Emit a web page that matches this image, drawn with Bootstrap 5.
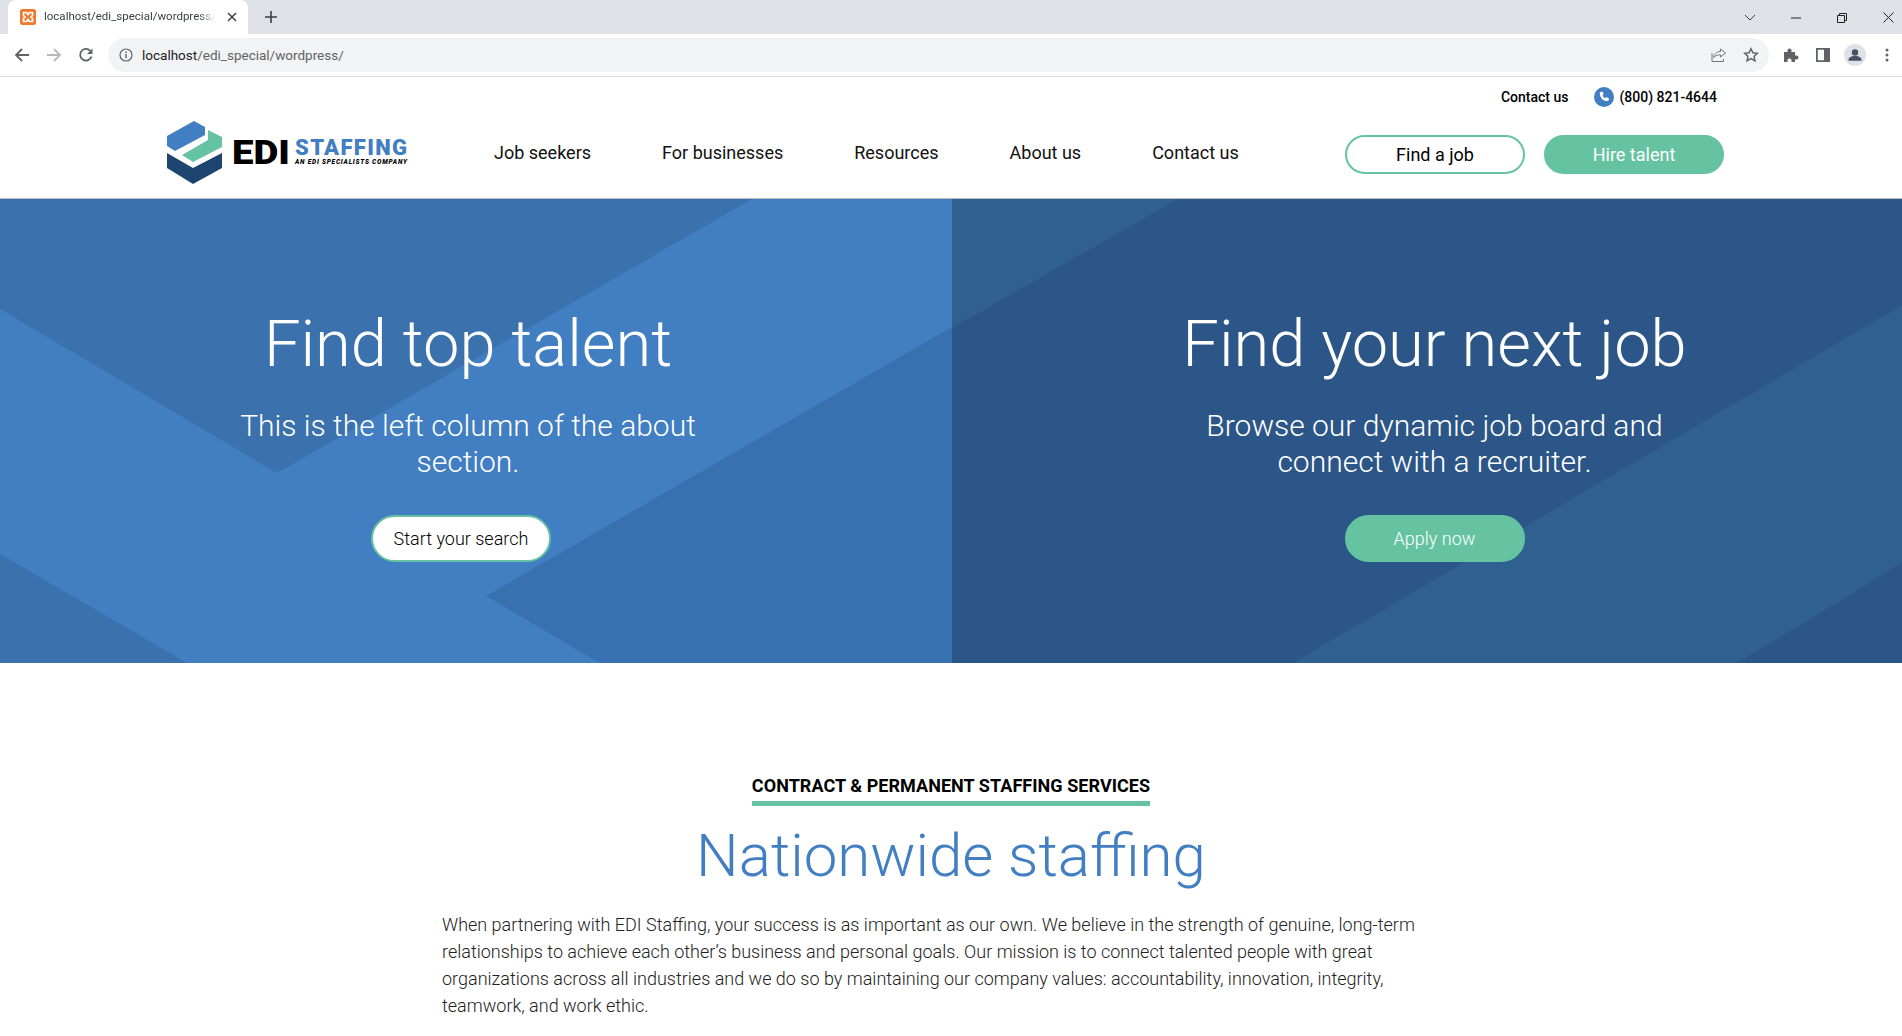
<!DOCTYPE html>
<html lang="en">
<head>
    <meta charset="UTF-8">
    <meta name="viewport" content="width=device-width, initial-scale=1.0">
    <title>EDI Staffing</title>
    <link href="https://cdn.jsdelivr.net/npm/bootstrap@5.3.0/dist/css/bootstrap.min.css" rel="stylesheet">
    <style>
        html, body { overflow: hidden; }
        body { font-family: Roboto, "Liberation Sans", sans-serif; color: #000; height: 1036px; }

        /* browser frame */
        .tab-strip { height: 34px; background: #dee1e6; padding-left: 8px; }
        .browser-tab { width: 240px; height: 34px; background: #fff; border-radius: 8px 8px 0 0; padding: 0 7px 0 12px; font-size: 11.5px; color: #3c4043; }
        .tab-title { width: 172px; white-space: nowrap; overflow: hidden; -webkit-mask-image: linear-gradient(90deg, #000 90%, transparent); mask-image: linear-gradient(90deg, #000 90%, transparent); }
        .win-btns { margin-right: -9px; }
        .win-btn { width: 46px; }
        .tool-bar { height: 43px; background: #fff; border-bottom: 1px solid #dadce0; padding: 0 0 0 6px; }
        .tool-btn { width: 32px; height: 32px; flex: none; }
        .omni-box { height: 34px; width: 1661px; flex: none; margin: 0 6px; background: #f1f3f4; border-radius: 17px; padding: 0 10px 0 11px; font-size: 13.5px; color: #5f6368; }
        .omni-box b { font-weight: 400; color: #202124; }
        .omni-url { margin-left: 9px; }

        /* site header */
        .site-head { height: 122px; padding: 10px 178px 0 166px; border-bottom: 1px solid #bbb; }
        .top-links { font-size: 14px; font-weight: 500; height: 20px; padding-right: 7px; }
        .phone-icon { margin: 0 5px 0 26px; }
        .main-row { margin-top: 14px; }
        .main-links { font-size: 18px; gap: 71px; margin: 0 0 2px 84px; }
        .main-links a { color: #111; text-decoration: none; }
        .main-btns { gap: 19px; margin-top: 3px; }
        .pill-btn { width: 180px; height: 39px; border-radius: 20px; border: 2px solid #66c3a1; font-size: 18px; padding: 0; line-height: 35px; }
        .pill-white { background: #fff; color: #000; }
        .pill-green { background: #66c3a1; color: #fff; }

        /* hero */
        .hero-panel { height: 464px; color: #fff; }
        .hero-left { flex: 0 0 952px; background: #417ec2; padding-right: 16px; }
        .hero-right { flex: 0 0 950px; background: #2c5687; padding-left: 15px; }
        .hero-body { z-index: 1; padding-top: 107px; }
        .hero-title { font-size: 65px; font-weight: 300; line-height: 77px; margin-bottom: 25px; }
        .hero-text { font-size: 30px; font-weight: 300; line-height: 36px; width: 490px; margin: 0 auto 35px; }
        .hero-btn { height: 47px; border-radius: 24px; border: 2px solid #66c3a1; font-size: 18px; font-weight: 300; line-height: 43px; padding: 0; }
        .btn-search { width: 180px; background: #fff; color: #000; margin-right: 14px; }
        .btn-apply { width: 180px; background: #66c3a1; color: #fff; }

        /* intro */
        .intro-wrap { padding-top: 109px; }
        .intro-label { font-size: 18px; font-weight: 700; line-height: 27px; letter-spacing: .05px; border-bottom: 5px solid #66c3a1; padding-bottom: 2px; color: #000; }
        .intro-title { font-size: 60px; font-weight: 300; line-height: 72px; color: #417ec2; margin: 14px 0 19px; }
        .intro-text { width: 980px; margin-left: 442px; font-size: 18px; font-weight: 300; line-height: 27px; color: #222; margin-bottom: 0; }
    </style>
</head>
<body>
    <div class="tab-strip d-flex align-items-center">
        <div class="browser-tab d-flex align-items-center">
            <svg width="16" height="16" viewBox="0 0 16 16" class="flex-shrink-0 me-2">
                <rect width="16" height="16" rx="2.5" fill="#f0782a"/>
                <path d="M3.5 3.5h3L8 5.5l1.5-2h3v3L11 8l1.5 1.5v3h-3L8 10.5l-1.5 2h-3v-3L5 8 3.5 6.500z" fill="none" stroke="#fff" stroke-width="1.7"/>
            </svg>
            <span class="tab-title">localhost/edi_special/wordpress/</span>
            <svg width="10" height="10" viewBox="0 0 10 10" class="ms-auto me-1"><path d="M1 1l8 8M9 1l-8 8" stroke="#3c4043" stroke-width="1.5"/></svg>
        </div>
        <svg width="14" height="14" viewBox="0 0 14 14" class="ms-3"><path d="M7 1v12M1 7h12" stroke="#3c4043" stroke-width="1.6"/></svg>
        <div class="ms-auto d-flex align-items-center win-btns">
            <div class="win-btn text-center"><svg width="12" height="8" viewBox="0 0 12 8"><path d="M1 1l5 5 5-5" fill="none" stroke="#3c4043" stroke-width="1"/></svg></div>
            <div class="win-btn text-center"><svg width="10" height="10" viewBox="0 0 10 10"><path d="M0 5h10" stroke="#222" stroke-width="1"/></svg></div>
            <div class="win-btn text-center"><svg width="10" height="10" viewBox="0 0 10 10"><path d="M.5 2.500h7v7h-7zM2.500 2.500v-2h7v7h-2" fill="none" stroke="#222" stroke-width="1"/></svg></div>
            <div class="win-btn text-center"><svg width="11" height="11" viewBox="0 0 11 11"><path d="M.5.5l10 10M10.500.5l-10 10" stroke="#222" stroke-width="1"/></svg></div>
        </div>
    </div>
    <div class="tool-bar d-flex align-items-center">
        <div class="tool-btn d-flex align-items-center justify-content-center"><svg width="16" height="16" viewBox="0 0 16 16"><path d="M15 8H2M8 2L2 8l6 6" fill="none" stroke="#5f6368" stroke-width="1.8"/></svg></div>
        <div class="tool-btn d-flex align-items-center justify-content-center"><svg width="16" height="16" viewBox="0 0 16 16"><path d="M1 8h13M8 2l6 6-6 6" fill="none" stroke="#b6b8ba" stroke-width="1.8"/></svg></div>
        <div class="tool-btn d-flex align-items-center justify-content-center"><svg width="16" height="16" viewBox="0 0 16 16"><path d="M13.500 9.500A5.800 5.800 0 1 1 12.200 3.800" fill="none" stroke="#5f6368" stroke-width="1.800"/><path d="M14.500 1.500v5.500H9z" fill="#5f6368"/></svg></div>
        <div class="omni-box d-flex align-items-center">
            <svg width="14" height="14" viewBox="0 0 14 14" class="flex-shrink-0"><circle cx="7" cy="7" r="6" fill="none" stroke="#5f6368" stroke-width="1.200"/><path d="M7 6v4.200M7 3.500v1.400" stroke="#5f6368" stroke-width="1.400"/></svg>
            <span class="omni-url"><b>localhost</b>/edi_special/wordpress/</span>
            <svg width="16" height="16" viewBox="0 0 16 16" class="ms-auto"><path d="M14.500 6L9.500 2v2.500C5 4.500 3 7.500 2.500 10.500 4.500 8.500 6.500 7.800 9.500 7.800V10z" fill="none" stroke="#70757a" stroke-width="1"/><path d="M1 6v8.500h11.500V12" fill="none" stroke="#70757a" stroke-width="1"/></svg>
            <svg width="16" height="16" viewBox="0 0 16 16" class="ms-3"><path d="M8 1.800l1.900 4 4.400.5-3.200 3 .8 4.400L8 11.500l-3.900 2.200.8-4.400-3.200-3 4.400-.5z" fill="none" stroke="#5f6368" stroke-width="1.500"/></svg>
        </div>
        <div class="tool-btn d-flex align-items-center justify-content-center"><svg width="16" height="16" viewBox="0 0 16 16"><path d="M1 5h3.500V3.500a2 2 0 0 1 4 0V5H12v3.500h1.500a2 2 0 0 1 0 4H12V15H8.500v-1.500a2 2 0 0 0-4 0V15H1z" fill="#5f6368"/></svg></div>
        <div class="tool-btn d-flex align-items-center justify-content-center"><svg width="14" height="14" viewBox="0 0 14 14"><path fill-rule="evenodd" d="M0 0h14v14H0zM1.800 1.800v10.400h6.200V1.800z" fill="#5f6368"/></svg></div>
        <div class="tool-btn d-flex align-items-center justify-content-center"><svg width="22" height="22" viewBox="0 0 22 22"><circle cx="11" cy="11" r="11" fill="#dee1e6"/><circle cx="11" cy="8.500" r="3.200" fill="#4a5066"/><path d="M4.500 16c0-2.800 3-4 6.500-4s6.500 1.200 6.500 4v.8h-13z" fill="#4a5066"/></svg></div>
        <div class="tool-btn d-flex align-items-center justify-content-center"><svg width="4" height="14" viewBox="0 0 4 14"><circle cx="2" cy="2" r="1.500" fill="#5f6368"/><circle cx="2" cy="7" r="1.500" fill="#5f6368"/><circle cx="2" cy="12" r="1.500" fill="#5f6368"/></svg></div>
    </div>

    <header class="site-head">
        <div class="top-links d-flex justify-content-end align-items-center">
            <span>Contact us</span>
            <svg width="20" height="20" viewBox="0 0 20 20" class="phone-icon">
                <circle cx="10" cy="10" r="10" fill="#417ec2"/>
                <path d="M6.500 5l2 -.5 1.200 2.800-1.200 1c.5 1.400 1.400 2.400 2.800 3l1-1.200 2.700 1.300-.5 2c-.2.500-.6.700-1.200.7C9 14 5.800 10.500 5.800 6.200c0-.5.200-1 .7-1.200z" fill="#fff"/>
            </svg>
            <span>(800) 821-4644</span>
        </div>
        <div class="main-row d-flex align-items-center">
            <svg width="244" height="64" viewBox="0 0 244 64" class="flex-shrink-0">
                <path d="M1 15L28 0l11 6v8L9 30 1 25z" fill="#417ec2"/>
                <path d="M42 9l14 7v10L27 41l-11-7 26-15z" fill="#66c3a1"/>
                <path d="M1 32l26 15 29-15v15L27 63 1 47z" fill="#1d4570"/>
                <text x="66" y="43" font-family="Roboto" font-weight="900" font-size="34" textLength="58" lengthAdjust="spacingAndGlyphs" fill="#000">EDI</text>
                <text x="129" y="34" font-family="Roboto" font-weight="900" font-size="22" textLength="112" lengthAdjust="spacing" fill="#417ec2">STAFFING</text>
                <text x="129" y="43" font-family="Roboto" font-weight="900" font-style="italic" font-size="6.500" textLength="112" lengthAdjust="spacing" fill="#000">AN EDI SPECIALISTS COMPANY</text>
            </svg>
            <nav class="main-links d-flex">
                <a href="#">Job seekers</a>
                <a href="#">For businesses</a>
                <a href="#">Resources</a>
                <a href="#">About us</a>
                <a href="#">Contact us</a>
            </nav>
            <div class="ms-auto d-flex main-btns">
                <a href="#" class="btn pill-btn pill-white">Find a job</a>
                <a href="#" class="btn pill-btn pill-green">Hire talent</a>
            </div>
        </div>
    </header>

    <section class="d-flex">
        <div class="hero-panel hero-left position-relative overflow-hidden text-center">
            <svg class="position-absolute top-0 start-0 w-100 h-100" viewBox="0 0 952 464" preserveAspectRatio="none">
                <polygon points="0,0 752,0 277,274 0,110" fill="#3b72ad"/>
                <polygon points="952,128 486,397 600,464 952,464" fill="#3870b0"/>
                <polygon points="0,355 187,464 0,464" fill="#3b72ad"/>
            </svg>
            <div class="hero-body position-relative">
                <h1 class="hero-title">Find top talent</h1>
                <p class="hero-text">This is the left column of the about section.</p>
                <a href="#" class="btn hero-btn btn-search">Start your search</a>
            </div>
        </div>
        <div class="hero-panel hero-right position-relative overflow-hidden text-center">
            <svg class="position-absolute top-0 start-0 w-100 h-100" viewBox="0 0 950 464" preserveAspectRatio="none">
                <polygon points="0,0 226,0 0,129" fill="#30608f"/>
                <polygon points="950,106 341,464 785,464 950,364" fill="#30608f"/>
            </svg>
            <div class="hero-body position-relative">
                <h1 class="hero-title">Find your next job</h1>
                <p class="hero-text">Browse our dynamic job board and connect with a recruiter.</p>
                <a href="#" class="btn hero-btn btn-apply">Apply now</a>
            </div>
        </div>
    </section>

    <section class="intro-wrap">
        <div class="text-center">
            <span class="intro-label d-inline-block">CONTRACT &amp; PERMANENT STAFFING SERVICES</span>
            <h2 class="intro-title">Nationwide staffing</h2>
        </div>
        <p class="intro-text">When partnering with EDI Staffing, your success is as important as our own. We believe in the strength of genuine, long-term relationships to achieve each other’s business and personal goals. Our mission is to connect talented people with great organizations across all industries and we do so by maintaining our company values: accountability, innovation, integrity, teamwork, and work ethic.</p>
    </section>

    <script src="https://cdn.jsdelivr.net/npm/bootstrap@5.3.0/dist/js/bootstrap.bundle.min.js"></script>
</body>
</html>
